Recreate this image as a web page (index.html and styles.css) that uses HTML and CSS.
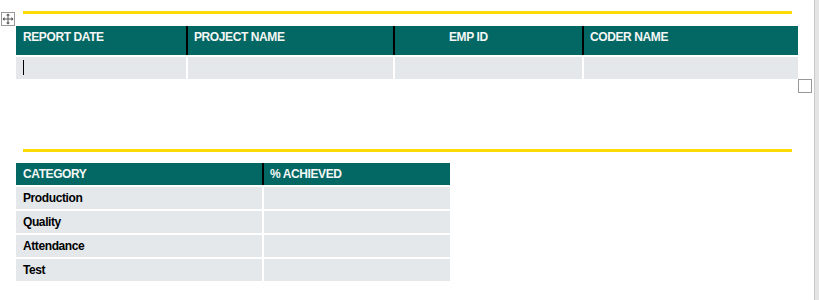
FILE: index.html
```html
<!DOCTYPE html>
<html lang="en">
<head>
  <meta charset="UTF-8" />
  <title>Coder Report</title>
  <link rel="stylesheet" href="styles.css">
</head>
<body>
  <div class="doc">
    <div class="sheet">
      <!-- table move handle -->
      <span class="move-handle">
        <svg width="12" height="12" viewBox="0 0 12 12">
          <path d="M6 1v10M1 6h10" stroke="#555" stroke-width="1" fill="none"/>
          <path d="M6 0.5l-2 2h4zM6 11.5l-2-2h4zM0.5 6l2-2v4zM11.5 6l-2-2v4z" fill="#555"/>
        </svg>
      </span>

      <div class="rule"></div>

      <table class="grid report-info">
        <colgroup>
          <col style="width:170px">
          <col style="width:207px">
          <col style="width:189px">
          <col style="width:216px">
        </colgroup>
        <thead>
          <tr>
            <th>REPORT DATE</th>
            <th>PROJECT NAME</th>
            <th class="indent">EMP ID</th>
            <th>CODER NAME</th>
          </tr>
        </thead>
        <tbody>
          <tr>
            <td><span class="caret"></span></td>
            <td></td>
            <td></td>
            <td></td>
          </tr>
        </tbody>
      </table>
      <div class="resize-handle"></div>

      <div class="rule rule-second"></div>

      <table class="grid scores">
        <colgroup>
          <col style="width:246px">
          <col style="width:188px">
        </colgroup>
        <thead>
          <tr>
            <th>CATEGORY</th>
            <th>% ACHIEVED</th>
          </tr>
        </thead>
        <tbody>
          <tr><td>Production</td><td></td></tr>
          <tr><td>Quality</td><td></td></tr>
          <tr><td>Attendance</td><td></td></tr>
          <tr><td>Test</td><td></td></tr>
        </tbody>
      </table>
    </div>
    <div class="edge"></div>
  </div>
</body>
</html>
```

FILE: styles.css
```css
/* Page */
body {
  margin: 0;
  background: #fff;
  font-family: "Liberation Sans", Arial, sans-serif;
}

.doc {
  display: flex;
  height: 300px;
  overflow: hidden;
}

.sheet {
  position: relative;
  flex: 1;
  padding-top: 11px;
}

/* Scrollbar edge on the right */
.edge {
  width: 4px;
  border-left: 1px solid #c9c9c9;
  background: #e4e4e4;
}

/* Yellow divider */
.rule {
  height: 3px;
  margin: 0 22px 0 23px;
  background: #fbdb05;
}
.rule-second {
  margin-top: 56px;
}

/* Move handle at the table corner */
.move-handle {
  position: absolute;
  left: 1px;
  top: 12px;
  width: 12px;
  height: 12px;
  border: 1px solid #9a9a9a;
  background: #fff;
  display: flex;
  align-items: center;
  justify-content: center;
}

/* Tables */
.grid {
  margin-left: 16px;
  border-collapse: separate;
  border-spacing: 0;
  table-layout: fixed;
  font-size: 12px;
  font-weight: bold;
  letter-spacing: -0.4px;
  line-height: 14px;
}
.report-info {
  width: 782px;
  margin-top: 12px;
}
.scores {
  width: 434px;
  margin-top: 11px;
}

.grid th,
.grid td {
  box-sizing: border-box;
  padding: 3px 7px 0 7px;
  text-align: left;
  vertical-align: top;
  white-space: nowrap;
}
.grid th {
  padding-top: 4px;
}
.grid th + th {
  border-left: 2px solid #000;
  padding-left: 6px;
}
.grid td + td {
  border-left: 2px solid #fff;
}

.grid th {
  background: #036763;
  color: #f4f7f6;
  font-weight: bold;
}
.grid td {
  background: #e4e8eb;
  color: #000;
  border-top: 2px solid #fff;
}

.report-info th {
  height: 29px;
}
.report-info td {
  height: 24px;
}
.report-info th.indent {
  padding-left: 54px;
}

.scores th {
  height: 22px;
}
.scores td {
  height: 24px;
  padding-top: 4px;
}

/* Text cursor in the first cell */
.caret {
  display: inline-block;
  width: 1px;
  height: 15px;
  background: #000;
  vertical-align: top;
}

/* Resize handle below the table */
.resize-handle {
  width: 12px;
  height: 12px;
  margin-left: 798px;
  border: 1.5px solid #999;
}
```
